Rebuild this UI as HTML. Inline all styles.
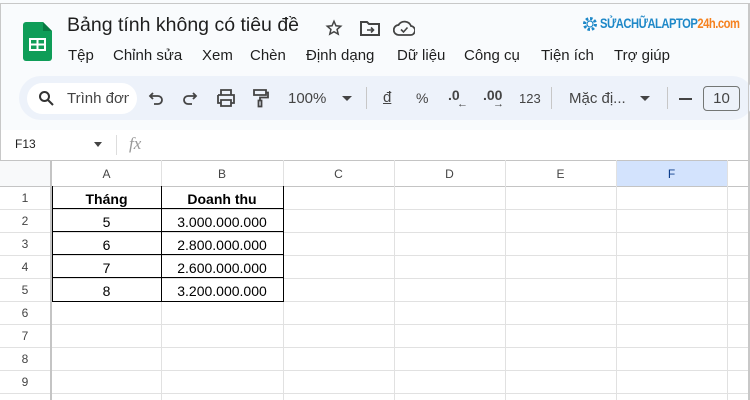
<!DOCTYPE html>
<html><head><meta charset="utf-8"><style>
*{margin:0;padding:0;box-sizing:border-box}
body{width:750px;height:400px;overflow:hidden;background:#f9fbfd;font-family:"Liberation Sans",Arial,sans-serif;position:relative;color:#1f1f1f}
.a{position:absolute;white-space:nowrap}
.frame{position:absolute;left:0;top:3px;width:750px;height:397px;border:1px solid #c8c8c8;border-bottom:none}
.tb{position:absolute;left:19px;top:76px;width:735px;height:44px;background:#edf2fa;border-radius:22px}
.grid{position:absolute;left:0;top:160px;width:749px;height:240px;background:#fff}
.h{position:absolute;left:0;height:1px;background:#e1e1e1;width:749px}
.v{position:absolute;top:0;width:1px;background:#e1e1e1;height:240px}
.cell{position:absolute;font-size:14px;text-align:center;color:#000}
.rn{position:absolute;left:0;width:50px;text-align:center;font-size:12px;color:#444}
.cn{position:absolute;top:7px;font-size:12px;text-align:center;color:#444}
</style></head><body>
<div class="frame"></div>
<svg class="a" style="left:23px;top:22px" width="29" height="39" viewBox="0 0 29 39"><path d="M3 0H20L29 9V36a3 3 0 0 1-3 3H3a3 3 0 0 1-3-3V3a3 3 0 0 1 3-3z" fill="#0f9d58"/><path d="M20 0L29 9H20z" fill="#087a42"/><rect x="7" y="17" width="15" height="11" fill="none" stroke="#fff" stroke-width="2"/><path d="M7 22.5H22M14.5 17V28" stroke="#fff" stroke-width="2"/></svg>
<div class="a" style="left:67px;top:14px;font-size:19.5px;color:#1f1f1f">Bảng tính không có tiêu đề</div>
<svg class="a" style="left:325px;top:19px" width="18" height="18" viewBox="0 0 24 24"><path d="M12 3l2.6 6 6.4.6-4.9 4.3 1.5 6.3L12 17l-5.6 3.2 1.5-6.3L3 9.6l6.4-.6z" fill="none" stroke="#444" stroke-width="2"/></svg>
<svg class="a" style="left:360px;top:20px" width="20" height="16" viewBox="0 0 20 16"><path d="M1 2h6l2 2h10v11H1z" fill="none" stroke="#444" stroke-width="2"/><path d="M7 10h6M11 7.5l2.5 2.5L11 12.5" fill="none" stroke="#444" stroke-width="1.6"/></svg>
<svg class="a" style="left:393px;top:20px" width="22" height="16" viewBox="0 0 22 16"><path d="M6 15a5 5 0 0 1-.5-10A7 7 0 0 1 18 6a4.5 4.5 0 0 1-1 9z" fill="none" stroke="#444" stroke-width="1.8"/><path d="M8 9.5l2.5 2.5 4-4.5" fill="none" stroke="#444" stroke-width="1.6"/></svg>
<svg class="a" style="left:582px;top:16px" width="16" height="16" viewBox="0 0 16 16"><circle cx="8" cy="8" r="5.5" fill="none" stroke="#1e88c8" stroke-width="3" stroke-dasharray="2.5 1.8"/><circle cx="8" cy="8" r="3" fill="#fff" stroke="#1e88c8" stroke-width="1.2"/></svg>
<div class="a" style="left:600px;top:15px;font-size:14px;font-weight:bold;color:#1e88c8;letter-spacing:-0.6px;transform:scaleX(0.8);transform-origin:left">SỬACHỮALAPTOP<span style="color:#f58220">24h.com</span></div>
<div class="a" style="left:68px;top:47px;font-size:15px">Tệp</div>
<div class="a" style="left:113px;top:47px;font-size:15px">Chỉnh sửa</div>
<div class="a" style="left:202px;top:47px;font-size:15px">Xem</div>
<div class="a" style="left:250px;top:47px;font-size:15px">Chèn</div>
<div class="a" style="left:306px;top:47px;font-size:15px">Định dạng</div>
<div class="a" style="left:397px;top:47px;font-size:15px">Dữ liệu</div>
<div class="a" style="left:464px;top:47px;font-size:15px">Công cụ</div>
<div class="a" style="left:541px;top:47px;font-size:15px">Tiện ích</div>
<div class="a" style="left:614px;top:47px;font-size:15px">Trợ giúp</div>
<div class="tb"></div>
<div class="a" style="left:27px;top:83px;width:110px;height:31px;background:#fff;border-radius:16px"></div>
<svg class="a" style="left:38px;top:90px" width="16" height="16" viewBox="0 0 16 16"><circle cx="6.5" cy="6.5" r="4.5" fill="none" stroke="#333" stroke-width="2"/><path d="M10 10l5 5" stroke="#333" stroke-width="2"/></svg>
<div class="a" style="left:67px;top:90px;font-size:15px;color:#444;width:62px;overflow:hidden">Trình đơn</div>
<svg class="a" style="left:148px;top:91px" width="16" height="14" viewBox="0 0 16 14"><path d="M5 2L2 5l3 3M2 5h8a4 4 0 0 1 0 8H6" fill="none" stroke="#444" stroke-width="1.8"/></svg>
<svg class="a" style="left:182px;top:91px" width="16" height="14" viewBox="0 0 16 14"><path d="M11 2l3 3-3 3M14 5H6a4 4 0 0 0 0 8h4" fill="none" stroke="#444" stroke-width="1.8"/></svg>
<svg class="a" style="left:216px;top:89px" width="20" height="18" viewBox="0 0 20 18"><path d="M5 1h10v5H5zM2 6h16v8h-3M5 14H2V6M5 11h10v6H5z" fill="none" stroke="#444" stroke-width="1.8"/></svg>
<svg class="a" style="left:251px;top:88px" width="20" height="20" viewBox="0 0 20 20"><path d="M3 2h12v5H3zM15 4.5h2v5H9v3M7.5 12.5h3v6h-3z" fill="none" stroke="#444" stroke-width="1.8"/></svg>
<div class="a" style="left:288px;top:90px;font-size:15px;color:#444">100%</div>
<div class="a" style="left:342px;top:96px;border:5px solid transparent;border-top:5px solid #444"></div>
<div class="a" style="left:366px;top:87px;width:1px;height:22px;background:#c7c7c7"></div>
<div class="a" style="left:383px;top:89px;font-size:15px;color:#444;text-decoration:underline">đ</div>
<div class="a" style="left:416px;top:90px;font-size:14px;color:#444">%</div>
<div class="a" style="left:448px;top:87px;font-size:14px;color:#444;font-weight:bold">.0</div>
<div class="a" style="left:457px;top:98px;font-size:11px;color:#444">←</div>
<div class="a" style="left:483px;top:87px;font-size:14px;color:#444;font-weight:bold">.00</div>
<div class="a" style="left:493px;top:98px;font-size:11px;color:#444">→</div>
<div class="a" style="left:519px;top:91px;font-size:13px;color:#444">123</div>
<div class="a" style="left:551px;top:87px;width:1px;height:22px;background:#c7c7c7"></div>
<div class="a" style="left:569px;top:90px;font-size:15px;color:#444">Mặc đị...</div>
<div class="a" style="left:640px;top:96px;border:5px solid transparent;border-top:5px solid #444"></div>
<div class="a" style="left:667px;top:87px;width:1px;height:22px;background:#c7c7c7"></div>
<div class="a" style="left:679px;top:98px;width:13px;height:2px;background:#444"></div>
<div class="a" style="left:703px;top:86px;width:37px;height:25px;border:1px solid #747775;border-radius:4px;font-size:15px;text-align:center;line-height:23px;color:#444">10</div>
<div class="a" style="left:1px;top:130px;width:748px;height:30px;background:#fff"></div>
<div class="a" style="left:15px;top:137px;font-size:12px">F13</div>
<div class="a" style="left:94px;top:142px;border:4px solid transparent;border-top:5px solid #444"></div>
<div class="a" style="left:116px;top:135px;width:1px;height:20px;background:#ddd"></div>
<div class="a" style="left:129px;top:134px;font-size:17px;font-style:italic;color:#999;font-family:'Liberation Serif',serif">fx</div>
<div class="grid">
<div class="a" style="left:0;top:0;width:50px;height:26px;background:#f8f9fa"></div>
<div class="a" style="left:616px;top:0;width:111px;height:26px;background:#d3e3fd"></div>
<div class="h" style="top:0;background:#c4c4c4"></div>
<div class="h" style="top:26px;background:#c4c4c4"></div>
<div class="h" style="top:49px"></div><div class="h" style="top:72px"></div><div class="h" style="top:95px"></div><div class="h" style="top:118px"></div><div class="h" style="top:141px"></div><div class="h" style="top:164px"></div><div class="h" style="top:187px"></div><div class="h" style="top:210px"></div><div class="h" style="top:233px"></div>
<div class="v" style="left:50px;width:2px;background:#c4c4c4"></div>
<div class="v" style="left:161px"></div><div class="v" style="left:283px"></div><div class="v" style="left:394px"></div><div class="v" style="left:505px"></div><div class="v" style="left:616px"></div><div class="v" style="left:727px"></div>
<div class="a" style="left:52px;top:26px;width:232px;height:116px;border:1px solid #000;border-top:none"></div>
<div class="a" style="left:52px;top:48px;width:232px;height:1px;background:#000"></div>
<div class="a" style="left:52px;top:71px;width:232px;height:1px;background:#000"></div>
<div class="a" style="left:52px;top:94px;width:232px;height:1px;background:#000"></div>
<div class="a" style="left:52px;top:117px;width:232px;height:1px;background:#000"></div>
<div class="a" style="left:161px;top:26px;width:1px;height:116px;background:#000"></div>
<div class="cn" style="left:52px;width:109px">A</div><div class="cn" style="left:161px;width:122px">B</div><div class="cn" style="left:283px;width:111px">C</div><div class="cn" style="left:394px;width:111px">D</div><div class="cn" style="left:505px;width:111px">E</div><div class="cn" style="left:616px;width:111px;color:#0b3c8c">F</div>
<div class="rn" style="top:31px">1</div><div class="rn" style="top:54px">2</div><div class="rn" style="top:77px">3</div><div class="rn" style="top:100px">4</div><div class="rn" style="top:123px">5</div><div class="rn" style="top:146px">6</div><div class="rn" style="top:169px">7</div><div class="rn" style="top:192px">8</div><div class="rn" style="top:215px">9</div>
<div class="cell" style="left:52px;width:109px;top:31px;font-weight:bold">Tháng</div>
<div class="cell" style="left:161px;width:122px;top:31px;font-weight:bold">Doanh thu</div>
<div class="cell" style="left:52px;width:109px;top:54px">5</div><div class="cell" style="left:161px;width:122px;top:54px">3.000.000.000</div>
<div class="cell" style="left:52px;width:109px;top:77px">6</div><div class="cell" style="left:161px;width:122px;top:77px">2.800.000.000</div>
<div class="cell" style="left:52px;width:109px;top:100px">7</div><div class="cell" style="left:161px;width:122px;top:100px">2.600.000.000</div>
<div class="cell" style="left:52px;width:109px;top:123px">8</div><div class="cell" style="left:161px;width:122px;top:123px">3.200.000.000</div>
</div>
<div class="a" style="left:748px;top:3px;width:1px;height:397px;background:#c8c8c8"></div>
</body></html>
